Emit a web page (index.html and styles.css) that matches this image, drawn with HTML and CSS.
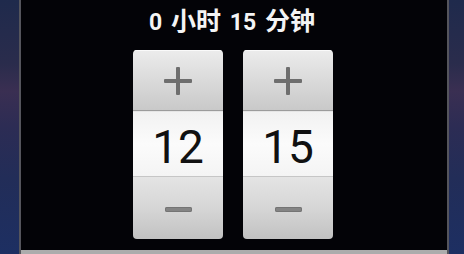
FILE: index.html
```html
<!DOCTYPE html>
<html>
<head>
<meta charset="utf-8">
<link rel="stylesheet" href="styles.css">
</head>
<body>
<div class="screen">
  <div class="wall"></div>
  <div class="dialog">
    <div class="title">0 <span class="cjk">小时</span> 15 <span class="cjk">分钟</span></div>
    <div class="pickers">
      <div class="picker">
        <div class="btn plus">
          <svg width="28" height="28" viewBox="0 0 28 28"><rect x="0" y="12" width="28" height="4" rx="1" fill="#6e6e6e"/><rect x="12" y="0" width="4" height="28" rx="1" fill="#6e6e6e"/></svg>
        </div>
        <div class="value">12</div>
        <div class="btn minus"><span class="bar"></span></div>
      </div>
      <div class="picker">
        <div class="btn plus">
          <svg width="28" height="28" viewBox="0 0 28 28"><rect x="0" y="12" width="28" height="4" rx="1" fill="#6e6e6e"/><rect x="12" y="0" width="4" height="28" rx="1" fill="#6e6e6e"/></svg>
        </div>
        <div class="value">15</div>
        <div class="btn minus"><span class="bar"></span></div>
      </div>
    </div>
    <div class="bottom"></div>
  </div>
  <div class="wall right"></div>
</div>
</body>
</html>
```
FILE: styles.css
```css
html, body { margin: 0; padding: 0; }
body {
  width: 464px;
  height: 254px;
  overflow: hidden;
  background: #000;
}
.screen {
  display: flex;
  width: 464px;
  height: 254px;
}
.wall {
  width: 19px;
  flex: none;
  background: linear-gradient(to bottom, #1f2a4c 0%, #2a2c4c 25%, #3a2f52 36%, #2c2c54 50%, #222d58 70%, #1d2f62 100%);
}
.wall.right { width: 15px; }
.dialog {
  width: 426px;
  flex: none;
  border-left: 2px solid #55555c;
  border-right: 2px solid #55555c;
  background: #030307;
  display: flex;
  flex-direction: column;
  align-items: center;
}
.title {
  height: 50px;
  box-sizing: border-box;
  padding-top: 7px;
  font-family: Roboto, "Noto Sans CJK SC", sans-serif;
  font-weight: bold;
  font-size: 23px;
  line-height: 30px;
  color: #f4f4f4;
  white-space: pre;
  margin-left: -4px;
  word-spacing: 3px;
}
.title .cjk { font-size: 25px; }
.pickers {
  display: flex;
  gap: 20px;
  margin-left: -2px;
}
.picker {
  width: 90px;
  height: 189px;
  display: flex;
  flex-direction: column;
  border-radius: 4px;
  overflow: hidden;
}
.btn {
  display: flex;
  align-items: center;
  justify-content: center;
}
.plus {
  height: 60px;
  background: linear-gradient(to bottom, #ececec 0%, #dcdcdc 45%, #c9c9c9 100%);
  border-bottom: 1px solid #9c9c9c;
  box-shadow: inset 0 1px 0 #fafafa;
}
.plus svg { margin-top: 1px; }
.value {
  height: 66px;
  box-sizing: border-box;
  padding-top: 5px;
  background: linear-gradient(to bottom, #f2f2f2 0%, #fbfbfb 50%, #f4f4f4 100%);
  border-top: 1px solid #e6e6e6;
  font-family: Roboto, sans-serif;
  font-size: 46px;
  line-height: 60px;
  color: #111;
  text-align: center;
  border-bottom: 1px solid #c6c6c6;
}
.minus {
  height: 62px;
  padding-top: 2px;
  box-sizing: border-box;
  background: linear-gradient(to bottom, #e4e4e4 0%, #d6d6d6 50%, #c2c2c2 100%);
}
.bar {
  width: 27px;
  height: 5px;
  border-radius: 2px;
  background: #848484;
  box-shadow: inset 0 0 0 1px #747474;
}
.bottom {
  margin-top: auto;
  width: 100%;
  height: 4px;
  background: #acacac;
}
```
